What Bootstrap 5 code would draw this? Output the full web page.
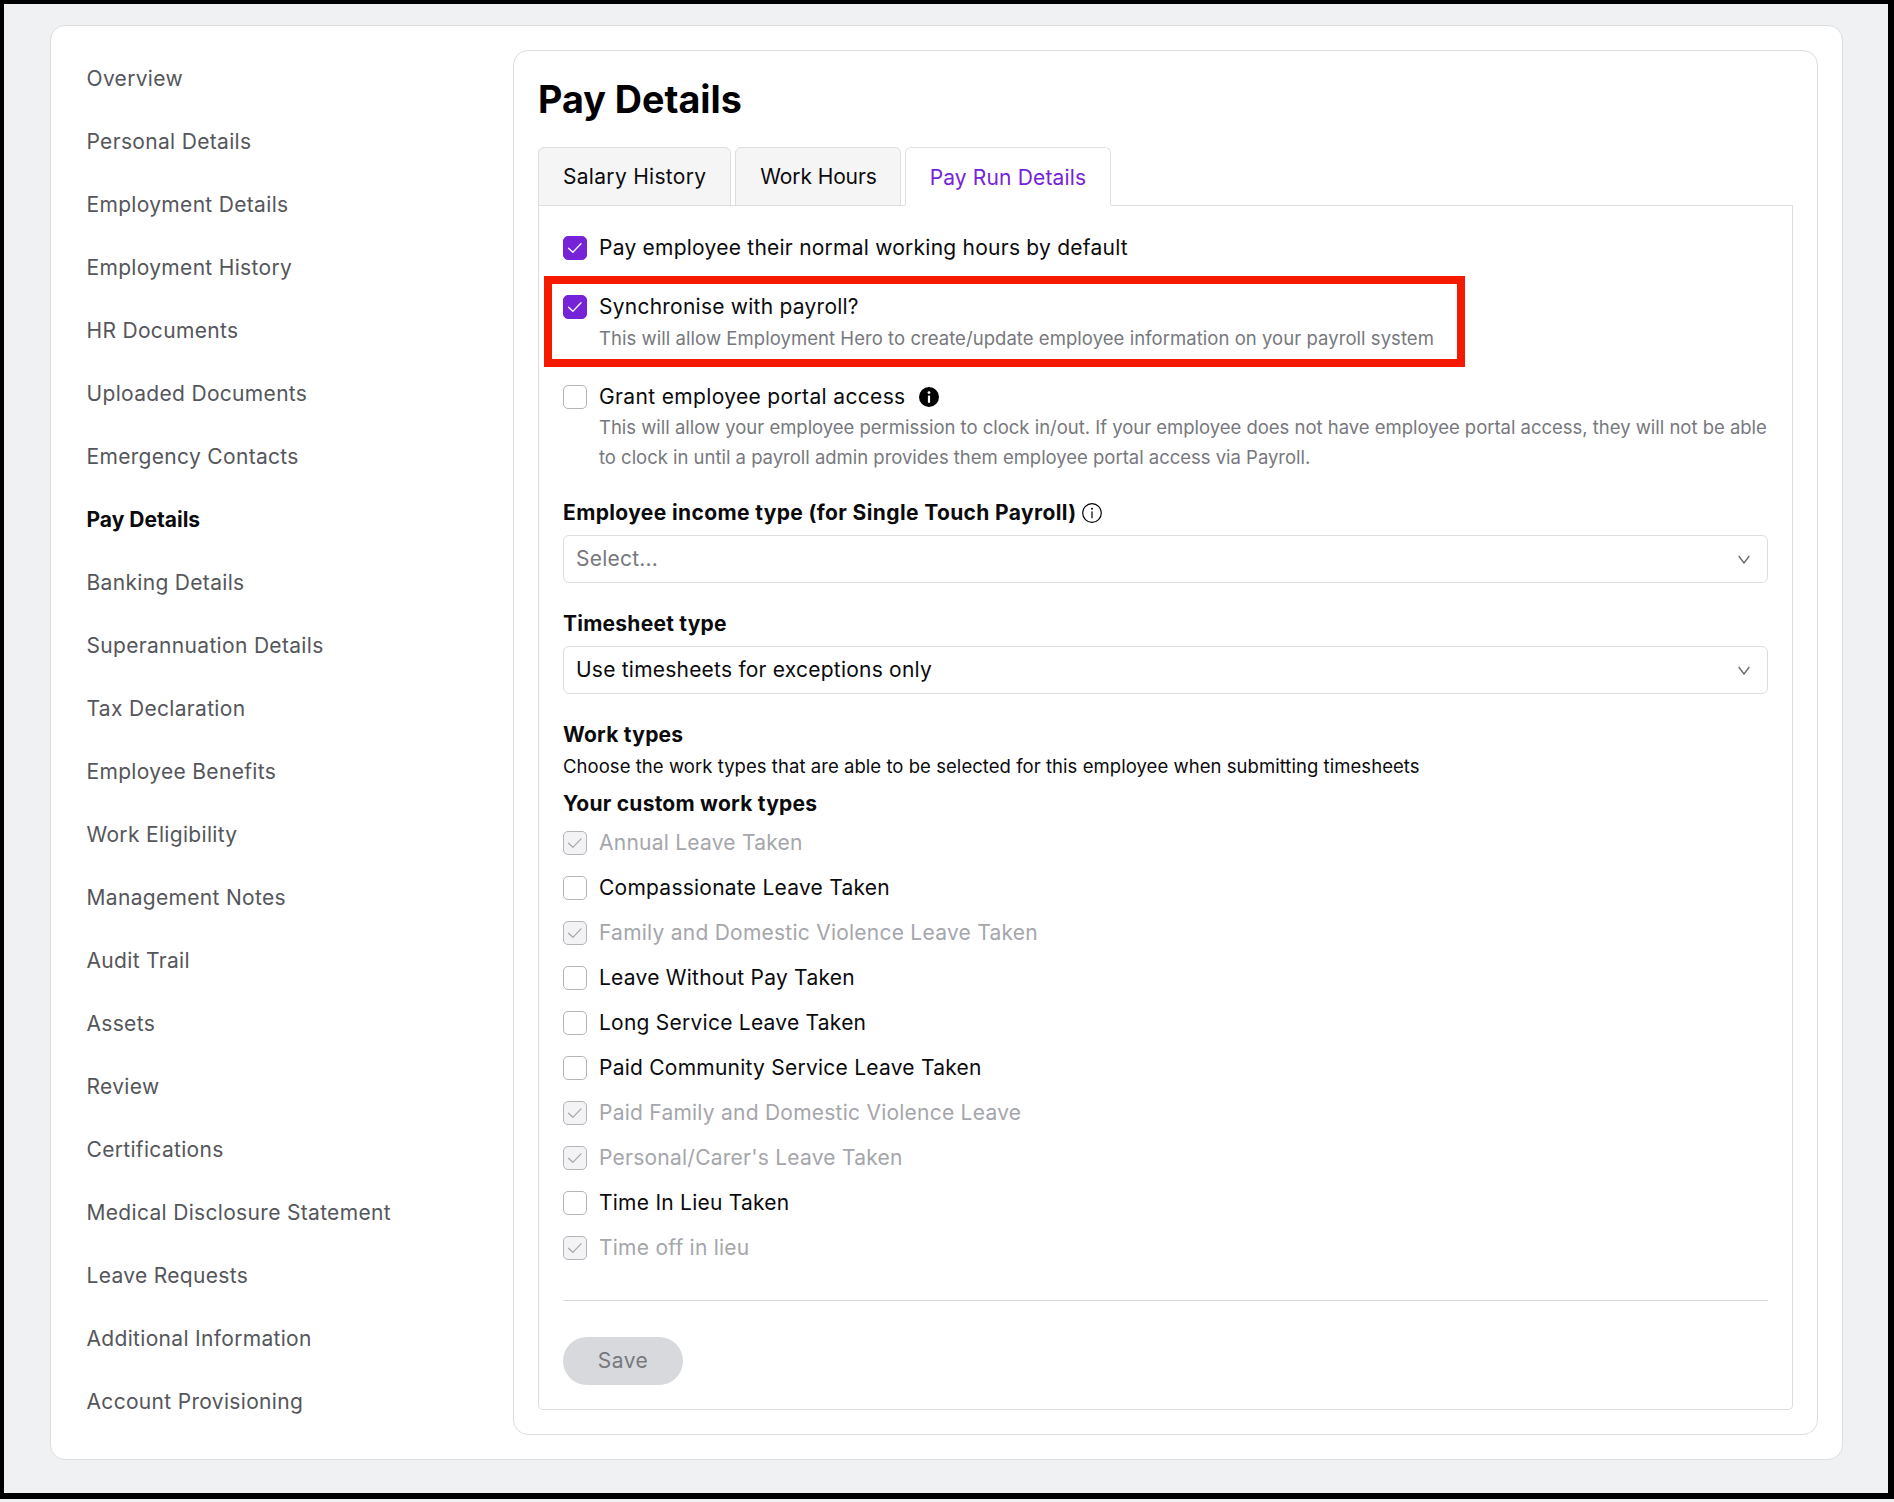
<!DOCTYPE html>
<html lang="en">
<head>
<meta charset="utf-8">
<title>Pay Details</title>
<link href="https://cdn.jsdelivr.net/npm/bootstrap@5.3.0/dist/css/bootstrap.min.css" rel="stylesheet">
<style>
html,body{height:100%;}
body{background:#f0f1f3;font-family:Inter,"Liberation Sans",sans-serif;font-size:21px;letter-spacing:.24px;color:#0b0b0d;height:1502px;overflow:hidden;}
.shot-frame{height:1499px;border:solid #000;border-width:4px 6px 6px 4px;padding:21px 45px 33px 46px;}
.outer-card{height:100%;background:#fff;border:1px solid #dcdde0;border-radius:15px;padding:24px 24px 24px 0;}
.side-col{width:462px;flex:none;padding-left:35.5px;margin-top:-3.5px;}
.side-col .nav-link{height:63px;line-height:63px;padding:0;color:#55565b;font-size:21px;letter-spacing:.32px;}
.side-col .nav-link.is-current{color:#0b0b0d;font-weight:700;letter-spacing:0;}
.main-card{flex:1;min-width:0;border:1px solid #dcdde0;border-radius:15px;padding:0 24px 24px;background:#fff;}
.page-title{font-size:37.7px;line-height:46px;font-weight:700;margin:0;padding:25px 0;color:#000;letter-spacing:0;}
.tab-row{--bs-nav-tabs-border-color:#dcdde0;gap:4px;border-bottom:1px solid #dcdde0;}
.tab-row .nav-link{height:59px;line-height:57px;padding:0 24px;margin-bottom:-1px;font-size:21px;letter-spacing:.3px;color:#0b0b0d;background:#f5f5f6;border:1px solid #dcdde0;border-radius:6px 6px 0 0;}
.tab-row .nav-item + .nav-item .nav-link{letter-spacing:-.12px;padding-right:23px;}
.tab-row .nav-item + .nav-item .nav-link.active{color:#7622d7;background:#fff;border-bottom-color:#fff;line-height:59px;letter-spacing:.15px;padding-right:24px;}
.tab-body{border:1px solid #dcdde0;border-top:0;border-radius:0 0 5px 5px;padding:30px 24px 24px;}
.check-row{display:flex;gap:12px;align-items:flex-start;margin:0;line-height:24px;}
.check-row .form-check-input{width:24px;height:24px;margin:0;flex:none;border:1px solid #b4b5ba;border-radius:5px;background-color:#fff;opacity:1;}
.check-row .form-check-input:checked{background-color:#7622d7;border-color:#7622d7;background-size:24px;background-image:url("data:image/svg+xml,%3csvg xmlns='http://www.w3.org/2000/svg' viewBox='0 0 24 24'%3e%3cpath fill='none' stroke='%23fff' stroke-width='1.3' stroke-linecap='round' stroke-linejoin='round' d='M5.5 12.2l4.4 4.1L18 7.8'/%3e%3c/svg%3e");}
.check-row .form-check-input:disabled{background-color:#f3f3f5;border-color:#b4b5ba;background-size:24px;background-image:url("data:image/svg+xml,%3csvg xmlns='http://www.w3.org/2000/svg' viewBox='0 0 24 24'%3e%3cpath fill='none' stroke='%23a5a6ab' stroke-width='1.2' stroke-linecap='round' stroke-linejoin='round' d='M5.5 12.2l4.4 4.1L18 7.8'/%3e%3c/svg%3e");}
.check-row.is-locked .form-check-label{color:#a5a6ab;opacity:1;}
.hint-text{font-size:18.5px;letter-spacing:.05px;line-height:30px;color:#77787d;margin:4px 0 0 36px;}
.hint-text.hint-long{letter-spacing:-.02px;margin-top:3px;}
.gap-a{margin-top:35px;}
.gap-b{margin-top:32px;}
.grant-label{letter-spacing:.35px;gap:13px;}
.field-label{display:flex;align-items:center;gap:5px;font-weight:700;line-height:24px;margin:29px 0 10px;color:#0b0b0d;}
.field-label.first-label{margin-top:29px;margin-bottom:10px;letter-spacing:.37px;gap:6px;}
.pick-box{height:48px;border:1px solid #dcdde0;border-radius:6px;font-size:21px;letter-spacing:.22px;padding:0 36px 0 12px;color:#0b0b0d;background-position:right 17px center;background-size:12px 9px;background-image:url("data:image/svg+xml,%3csvg xmlns='http://www.w3.org/2000/svg' viewBox='0 0 12 9'%3e%3cpath fill='none' stroke='%236b6c71' stroke-width='1.4' d='M.7 1l5.3 7 5.3-7'/%3e%3c/svg%3e");}
.pick-box.is-empty{color:#77787d;}
.sect-title{font-weight:700;line-height:24px;margin:29px 0 7px;}
.sect-text{font-size:18.5px;letter-spacing:.05px;line-height:24px;margin:0 0 14px;}
.sect-sub{font-weight:700;line-height:24px;margin:0 0 15px;}
.type-list{display:flex;flex-direction:column;gap:21px;}
.foot-rule{margin:40px 0 36px;border:0;border-top:1px solid #d8d9dc;opacity:1;}
.save-btn{width:120px;height:48px;border-radius:24px;padding:0;border:0;font-size:21px;letter-spacing:.5px;background:#d8d9dc;color:#77787d;opacity:1;}
.save-btn:disabled{background:#d8d9dc;color:#77787d;opacity:1;}
.mark-host{position:relative;}
.red-mark{position:absolute;left:-19px;top:-19px;width:921px;height:91px;border:8px solid #f51900;pointer-events:none;}
</style>
</head>
<body>
<div class="shot-frame">
  <div class="outer-card d-flex">
    <nav class="side-col nav flex-column flex-nowrap">
      <a class="nav-link" href="#">Overview</a>
      <a class="nav-link" href="#">Personal Details</a>
      <a class="nav-link" href="#">Employment Details</a>
      <a class="nav-link" href="#">Employment History</a>
      <a class="nav-link" href="#">HR Documents</a>
      <a class="nav-link" href="#">Uploaded Documents</a>
      <a class="nav-link" href="#">Emergency Contacts</a>
      <a class="nav-link is-current" href="#">Pay Details</a>
      <a class="nav-link" href="#">Banking Details</a>
      <a class="nav-link" href="#">Superannuation Details</a>
      <a class="nav-link" href="#">Tax Declaration</a>
      <a class="nav-link" href="#">Employee Benefits</a>
      <a class="nav-link" href="#">Work Eligibility</a>
      <a class="nav-link" href="#">Management Notes</a>
      <a class="nav-link" href="#">Audit Trail</a>
      <a class="nav-link" href="#">Assets</a>
      <a class="nav-link" href="#">Review</a>
      <a class="nav-link" href="#">Certifications</a>
      <a class="nav-link" href="#">Medical Disclosure Statement</a>
      <a class="nav-link" href="#">Leave Requests</a>
      <a class="nav-link" href="#">Additional Information</a>
      <a class="nav-link" href="#">Account Provisioning</a>
    </nav>
    <main class="main-card">
      <h1 class="page-title">Pay Details</h1>
      <ul class="nav nav-tabs tab-row">
        <li class="nav-item"><a class="nav-link" href="#">Salary History</a></li>
        <li class="nav-item"><a class="nav-link" href="#">Work Hours</a></li>
        <li class="nav-item"><a class="nav-link active" href="#">Pay Run Details</a></li>
      </ul>
      <div class="tab-body">
        <div class="check-row form-check ps-0">
          <input class="form-check-input" type="checkbox" id="c1" checked>
          <label class="form-check-label" for="c1">Pay employee their normal working hours by default</label>
        </div>
        <div class="mark-host gap-a">
          <div class="check-row form-check ps-0">
            <input class="form-check-input" type="checkbox" id="c2" checked>
            <label class="form-check-label" for="c2">Synchronise with payroll?</label>
          </div>
          <p class="hint-text">This will allow Employment Hero to create/update employee information on your payroll system</p>
          <div class="red-mark"></div>
        </div>
        <div class="gap-b">
          <div class="check-row form-check ps-0">
            <input class="form-check-input" type="checkbox" id="c3">
            <label class="form-check-label d-flex align-items-center grant-label" for="c3">Grant employee portal access
              <svg width="20" height="20" viewBox="0 0 20 20"><circle cx="10" cy="10" r="10" fill="#000"/><circle cx="10" cy="5.6" r="1.4" fill="#fff"/><rect x="8.9" y="8.4" width="2.2" height="7.4" rx=".6" fill="#fff"/></svg>
            </label>
          </div>
          <p class="hint-text hint-long">This will allow your employee permission to clock in/out. If your employee does not have employee portal access, they will not be able to clock in until a payroll admin provides them employee portal access via Payroll.</p>
        </div>
        <label class="field-label first-label" for="s1">Employee income type (for Single Touch Payroll)
          <svg width="20" height="20" viewBox="0 0 20 20"><circle cx="10" cy="10" r="9.3" fill="none" stroke="#000" stroke-width="1.2"/><circle cx="10" cy="5.8" r="1" fill="#000"/><rect x="9.4" y="8.4" width="1.2" height="6.8" fill="#000"/></svg>
        </label>
        <select class="form-select pick-box is-empty" id="s1"><option>Select...</option></select>
        <label class="field-label" for="s2">Timesheet type</label>
        <select class="form-select pick-box" id="s2"><option>Use timesheets for exceptions only</option></select>
        <div class="sect-title">Work types</div>
        <p class="sect-text">Choose the work types that are able to be selected for this employee when submitting timesheets</p>
        <div class="sect-sub">Your custom work types</div>
        <div class="type-list">
          <div class="check-row form-check ps-0 is-locked"><input class="form-check-input" type="checkbox" checked disabled id="w1"><label class="form-check-label" for="w1">Annual Leave Taken</label></div>
          <div class="check-row form-check ps-0"><input class="form-check-input" type="checkbox" id="w2"><label class="form-check-label" for="w2">Compassionate Leave Taken</label></div>
          <div class="check-row form-check ps-0 is-locked"><input class="form-check-input" type="checkbox" checked disabled id="w3"><label class="form-check-label" for="w3">Family and Domestic Violence Leave Taken</label></div>
          <div class="check-row form-check ps-0"><input class="form-check-input" type="checkbox" id="w4"><label class="form-check-label" for="w4">Leave Without Pay Taken</label></div>
          <div class="check-row form-check ps-0"><input class="form-check-input" type="checkbox" id="w5"><label class="form-check-label" for="w5">Long Service Leave Taken</label></div>
          <div class="check-row form-check ps-0"><input class="form-check-input" type="checkbox" id="w6"><label class="form-check-label" for="w6">Paid Community Service Leave Taken</label></div>
          <div class="check-row form-check ps-0 is-locked"><input class="form-check-input" type="checkbox" checked disabled id="w7"><label class="form-check-label" for="w7">Paid Family and Domestic Violence Leave</label></div>
          <div class="check-row form-check ps-0 is-locked"><input class="form-check-input" type="checkbox" checked disabled id="w8"><label class="form-check-label" for="w8">Personal/Carer's Leave Taken</label></div>
          <div class="check-row form-check ps-0"><input class="form-check-input" type="checkbox" id="w9"><label class="form-check-label" for="w9">Time In Lieu Taken</label></div>
          <div class="check-row form-check ps-0 is-locked"><input class="form-check-input" type="checkbox" checked disabled id="w10"><label class="form-check-label" for="w10">Time off in lieu</label></div>
        </div>
        <hr class="foot-rule">
        <button class="btn save-btn" type="button" disabled>Save</button>
      </div>
    </main>
  </div>
</div>
<script src="https://cdn.jsdelivr.net/npm/bootstrap@5.3.0/dist/js/bootstrap.bundle.min.js"></script>
</body>
</html>
